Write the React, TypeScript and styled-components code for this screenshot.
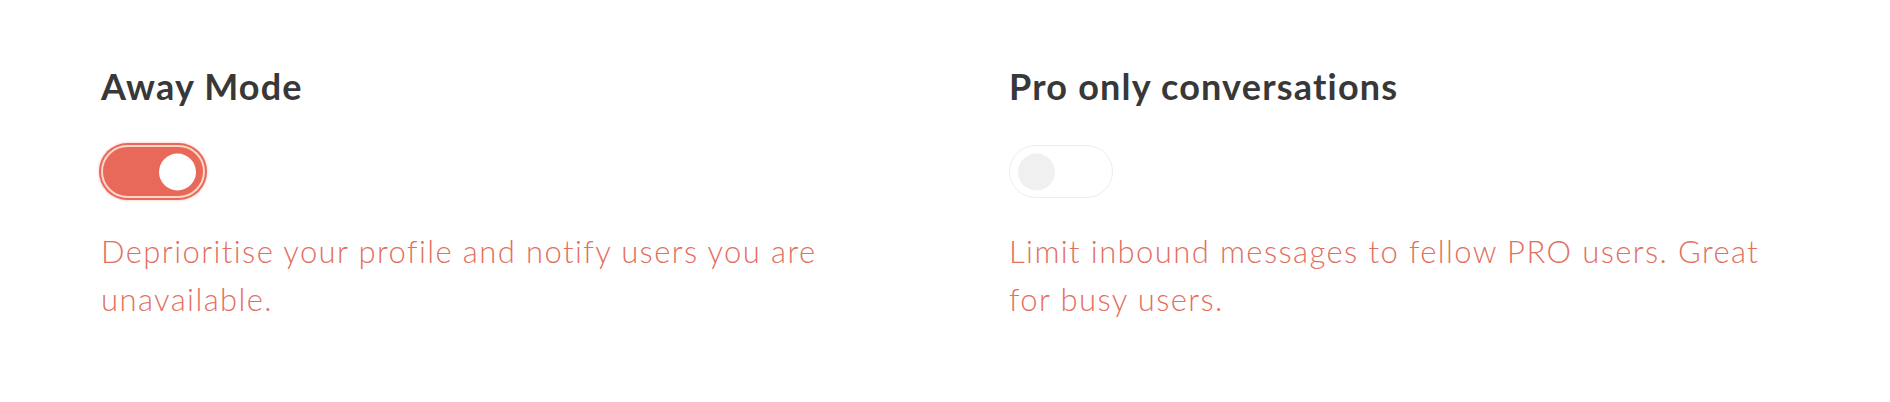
import React, { useState } from 'react';
import styled, { createGlobalStyle, css } from 'styled-components';

const GlobalStyle = createGlobalStyle`
  html, body {
    margin: 0;
    padding: 0;
    background: #ffffff;
  }
  body {
    font-family: Lato, "Noto Sans", sans-serif;
  }
`;

const Page = styled.div`
  display: grid;
  grid-template-columns: 908px 1fr;
  padding: 65px 0 0 101px;
  box-sizing: border-box;
  width: 100%;
  height: 402px;
  background: #ffffff;
`;

const Setting = styled.section`
  display: flex;
  flex-direction: column;
  align-items: flex-start;
`;

const Title = styled.h2`
  margin: 0;
  font-family: Lato, "Noto Sans", sans-serif;
  font-size: 36px;
  line-height: 1.2;
  font-weight: 700;
  letter-spacing: 1.2px;
  color: #383838;
`;

const Track = styled.button<{ $on: boolean }>`
  margin-top: 37px;
  position: relative;
  width: 104px;
  height: 53px;
  padding: 0;
  border-radius: 27px;
  box-sizing: border-box;
  cursor: pointer;
  ${({ $on }) =>
    $on
      ? css`
          background: #e8695a;
          border: 2px solid #fcd8c9;
          box-shadow: 0 0 0 2px #e8695a, 0 0 3px 2px rgba(232, 105, 90, 0.45);
        `
      : css`
          background: #ffffff;
          border: 1px solid #ececec;
        `}
`;

const Knob = styled.span<{ $on: boolean }>`
  position: absolute;
  top: 50%;
  width: 37px;
  height: 37px;
  border-radius: 50%;
  transform: translateY(-50%);
  ${({ $on }) =>
    $on
      ? css`
          right: 7px;
          background: #ffffff;
        `
      : css`
          left: 8px;
          background: #f0f0f0;
        `}
`;

const Description = styled.p`
  margin: 29px 0 0 0;
  max-width: 775px;
  font-family: Lato, "Noto Sans", sans-serif;
  font-size: 31px;
  font-weight: 300;
  line-height: 48px;
  letter-spacing: 1.4px;
  color: #e36f5f;
`;

interface ToggleProps {
  on: boolean;
  onChange: () => void;
}

function Toggle({ on, onChange }: ToggleProps) {
  return (
    <Track $on={on} role="switch" aria-checked={on} onClick={onChange}>
      <Knob $on={on} />
    </Track>
  );
}

export default function App() {
  const [away, setAway] = useState(true);
  const [proOnly, setProOnly] = useState(false);

  return (
    <>
      <GlobalStyle />
      <Page>
        <Setting>
          <Title>Away Mode</Title>
          <Toggle on={away} onChange={() => setAway(!away)} />
          <Description>
            Deprioritise your profile and notify users you are unavailable.
          </Description>
        </Setting>
        <Setting>
          <Title>Pro only conversations</Title>
          <Toggle on={proOnly} onChange={() => setProOnly(!proOnly)} />
          <Description>
            Limit inbound messages to fellow PRO users. Great for busy users.
          </Description>
        </Setting>
      </Page>
    </>
  );
}
